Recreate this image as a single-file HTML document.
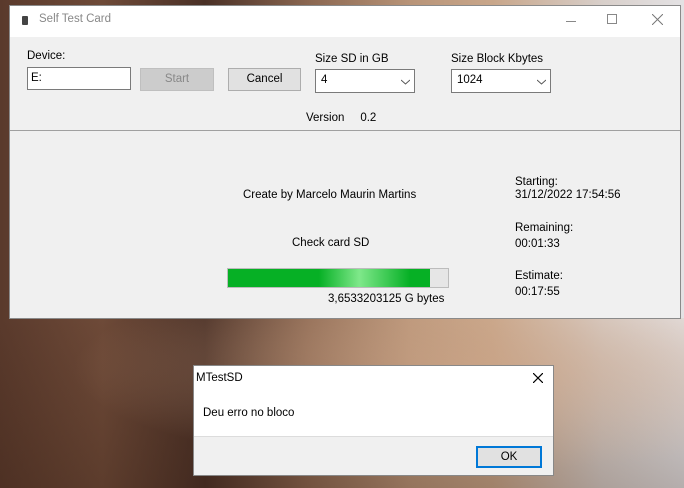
<!DOCTYPE html>
<html><head><style>
*{margin:0;padding:0;box-sizing:border-box}
body{width:684px;height:488px;overflow:hidden;position:relative;font-family:"Liberation Sans",sans-serif;font-size:11.5px;color:#000;
background:linear-gradient(90deg,#5a3a2c 0%,#6e4a38 15%,#4a3026 30%,#8a6650 45%,#b89478 60%,#c8a68a 72%,#d8cfca 88%,#e4e2e4 100%)}
.a{position:absolute;white-space:nowrap}
#shade{position:absolute;left:0;top:318px;width:684px;height:170px;background:radial-gradient(ellipse at 70% 30%,rgba(210,170,140,.6),rgba(0,0,0,0) 60%),linear-gradient(180deg,rgba(0,0,0,0),rgba(40,20,10,.25))}
#win{position:absolute;left:9px;top:5px;width:672px;height:314px;background:#f0f0f0;border:1px solid #8a8a8a}
#tb{position:absolute;left:0;top:0;width:670px;height:31px;background:#fff}
.box{position:absolute;background:#fff;border:1px solid #7a7a7a}
.btn{position:absolute;background:#e1e1e1;border:1px solid #adadad;text-align:center;line-height:20px}
#dlg{position:absolute;left:193px;top:365px;width:361px;height:111px;background:#f0f0f0;border:1px solid #888}
</style></head><body>
<div id="shade"></div>
<div id="win">
 <div id="tb">
  <div class="a" style="left:12px;top:10px;width:6px;height:9px;background:#444;border-radius:1px"></div>
  <div class="a" style="left:29px;top:7px;color:#888">Self Test Card</div>
  <div class="a" style="left:556px;top:15px;width:10px;height:1px;background:#888"></div>
  <div class="a" style="left:597px;top:8px;width:10px;height:10px;border:1px solid #888"></div>
  <svg class="a" style="left:642px;top:8px" width="11" height="11"><path d="M0 0L11 11M11 0L0 11" stroke="#777" stroke-width="1"/></svg>
 </div>
 <div class="a" style="left:17px;top:44px">Device:</div>
 <div class="box" style="left:17px;top:61px;width:104px;height:23px"><span class="a" style="left:3px;top:4px">E:</span></div>
 <div class="btn" style="left:130px;top:62px;width:74px;height:23px;background:#cccccc;border-color:#bfbfbf;color:#888">Start</div>
 <div class="btn" style="left:218px;top:62px;width:73px;height:23px">Cancel</div>
 <div class="a" style="left:305px;top:47px">Size SD in GB</div>
 <div class="box" style="left:305px;top:63px;width:100px;height:24px"><span class="a" style="left:5px;top:4px">4</span><svg class="a" style="left:85px;top:9px" width="9" height="6"><path d="M0 1L4.5 5L9 1" fill="none" stroke="#555"/></svg></div>
 <div class="a" style="left:441px;top:47px">Size Block Kbytes</div>
 <div class="box" style="left:441px;top:63px;width:100px;height:24px"><span class="a" style="left:5px;top:4px">1024</span><svg class="a" style="left:85px;top:9px" width="9" height="6"><path d="M0 1L4.5 5L9 1" fill="none" stroke="#555"/></svg></div>
 <div class="a" style="left:296px;top:106px">Version &nbsp;&nbsp;&nbsp;&nbsp;0.2</div>
 <div class="a" style="left:0;top:124px;width:670px;height:1px;background:#a0a0a0"></div>
 <div class="a" style="left:233px;top:183px">Create by Marcelo Maurin Martins</div>
 <div class="a" style="left:282px;top:231px">Check card SD</div>
 <div class="a" style="left:217px;top:262px;width:222px;height:20px;background:#e6e6e6;border:1px solid #bcbcbc"></div>
 <div class="a" style="left:218px;top:263px;width:202px;height:18px;background:linear-gradient(90deg,#06b025 0%,#06b025 45%,#7fe88a 65%,#06b025 90%);"></div>
 <div class="a" style="left:318px;top:287px">3,6533203125 G bytes</div>
 <div class="a" style="left:505px;top:170px;line-height:13px">Starting:<br>31/12/2022 17:54:56</div>
 <div class="a" style="left:505px;top:214px;line-height:16px">Remaining:<br>00:01:33</div>
 <div class="a" style="left:505px;top:262px;line-height:16px">Estimate:<br>00:17:55</div>
</div>
<div id="dlg">
 <div class="a" style="left:0;top:0;width:359px;height:70px;background:#fff"></div>
 <div class="a" style="left:2px;top:6px">MTestSD</div>
 <svg class="a" style="left:339px;top:7px" width="10" height="10"><path d="M0 0L10 10M10 0L0 10" stroke="#000" stroke-width="1.2"/></svg>
 <div class="a" style="left:9px;top:41px">Deu erro no bloco</div>
 <div class="a" style="left:0;top:70px;width:359px;height:1px;background:#dcdcdc"></div>
 <div class="btn" style="left:282px;top:80px;width:66px;height:22px;border:2px solid #0078d7;line-height:18px">OK</div>
</div>
</body></html>
